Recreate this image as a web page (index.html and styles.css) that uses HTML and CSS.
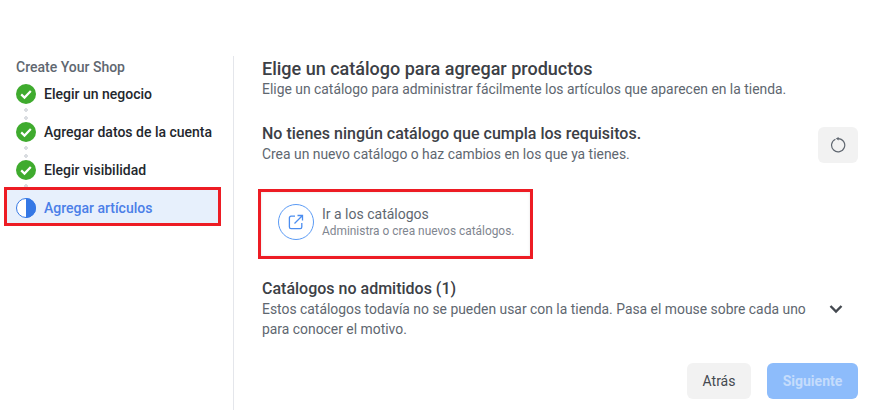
FILE: index.html
```html
<!DOCTYPE html>
<html lang="es">
<head>
    <meta charset="UTF-8">
    <title>Create Your Shop</title>
    <link rel="stylesheet" href="styles.css">
</head>
<body>
    <div class="wizard">
        <aside class="sidebar">
            <h4 class="sidebar-title">Create Your Shop</h4>
            <ul class="steps">
                <li class="step done">
                    <svg class="step-icon" viewBox="0 0 20 20"><circle cx="10" cy="10" r="10" fill="#3fab2e"/><path d="M5.2 10.4l3.3 3.2 6.3-6.6" fill="none" stroke="#fff" stroke-width="2.2"/></svg>
                    <span>Elegir un negocio</span>
                </li>
                <li class="step done">
                    <svg class="step-icon" viewBox="0 0 20 20"><circle cx="10" cy="10" r="10" fill="#3fab2e"/><path d="M5.2 10.4l3.3 3.2 6.3-6.6" fill="none" stroke="#fff" stroke-width="2.2"/></svg>
                    <span>Agregar datos de la cuenta</span>
                </li>
                <li class="step done">
                    <svg class="step-icon" viewBox="0 0 20 20"><circle cx="10" cy="10" r="10" fill="#3fab2e"/><path d="M5.2 10.4l3.3 3.2 6.3-6.6" fill="none" stroke="#fff" stroke-width="2.2"/></svg>
                    <span>Elegir visibilidad</span>
                </li>
                <li class="step current">
                    <svg class="step-icon" viewBox="0 0 20 20"><circle cx="10" cy="10" r="9.5" fill="#fff" stroke="#3578e5"/><path d="M10 0a10 10 0 0 1 0 20z" fill="#3578e5"/></svg>
                    <span>Agregar artículos</span>
                </li>
            </ul>
        </aside>

        <main class="content">
            <h2 class="title">Elige un catálogo para agregar productos</h2>
            <p class="text">Elige un catálogo para administrar fácilmente los artículos que aparecen en la tienda.</p>

            <div class="notice">
                <div>
                    <h3 class="subtitle">No tienes ningún catálogo que cumpla los requisitos.</h3>
                    <p class="text">Crea un nuevo catálogo o haz cambios en los que ya tienes.</p>
                </div>
                <button class="btn refresh" type="button" aria-label="Actualizar">
                    <svg viewBox="0 0 16 16" width="16" height="16"><path d="M5.4 2.2A6.6 6.6 0 1 0 8 1.6" fill="none" stroke="#606770" stroke-width="1.2"/><path d="M8.6 0v3.4L5.8 1.6z" fill="#606770"/></svg>
                </button>
            </div>

            <a class="link-card" href="#">
                <span class="link-icon">
                    <svg viewBox="0 0 16 16" width="16" height="16"><path d="M7 2.2H3a1.6 1.6 0 0 0-1.6 1.6V13A1.6 1.6 0 0 0 3 14.6h9.200a1.6 1.6 0 0 0 1.6-1.6V9" fill="none" stroke="#4b8df0" stroke-width="1.3"/><path d="M6.5 9.500L14 2M9.500 1.500h5v5" fill="none" stroke="#4b8df0" stroke-width="1.3"/></svg>
                </span>
                <span class="link-text">
                    <span class="link-title">Ir a los catálogos</span>
                    <span class="link-desc">Administra o crea nuevos catálogos.</span>
                </span>
            </a>

            <div class="unsupported">
                <div>
                    <h3 class="subtitle">Catálogos no admitidos (1)</h3>
                    <p class="text">Estos catálogos todavía no se pueden usar con la tienda. Pasa el mouse sobre cada uno para conocer el motivo.</p>
                </div>
                <svg class="chevron" viewBox="0 0 14 10" width="14" height="10"><path d="M1.5 2l5.500 5.500L12.500 2" fill="none" stroke="#444950" stroke-width="2.4"/></svg>
            </div>

            <div class="actions">
                <button class="btn back" type="button">Atrás</button>
                <button class="btn primary" type="button" disabled>Siguiente</button>
            </div>
        </main>
    </div>
</body>
</html>
```

FILE: styles.css
```css
body {
    margin: 0;
    background-color: #ffffff;
    font-family: Roboto, "Liberation Sans", sans-serif;
    color: #444950;
    height: 410px;
    overflow: hidden;
}
.wizard {
    display: flex;
    padding-top: 56px;
}
.sidebar {
    width: 233px;
    height: 354px;
    border-right: 1px solid #e4e6eb;
    flex-shrink: 0;
}
.sidebar-title {
    margin: 3px 0 0 16px;
    font-size: 14px;
    line-height: 16px;
    font-weight: 500;
    color: #606770;
}
.steps {
    list-style: none;
    margin: 2px 0 0 0;
    padding: 0;
}
.step {
    position: relative;
    display: flex;
    align-items: center;
    height: 34px;
    margin-bottom: 4px;
    padding-left: 16px;
    font-size: 14px;
    font-weight: 500;
    color: #23272d;
}
.step:not(:last-child)::after {
    content: "";
    position: absolute;
    left: 24px;
    top: 31px;
    width: 4px;
    height: 12px;
    background: radial-gradient(circle at 2px 2px, #dadde1 2px, transparent 2px) 0 0 / 4px 8px;
}
.step-icon {
    width: 20px;
    height: 20px;
    margin-right: 8px;
    flex-shrink: 0;
}
/* the red box is part of the screenshot */
.step.current {
    box-sizing: border-box;
    width: 217px;
    height: 39px;
    margin: -4px 0 0 4px;
    padding: 3px 0 0 9px;
    border: 3px solid #ed1c24;
    background-color: #e7f0fc;
    color: #4b7fe8;
}
.content {
    flex: 1;
    padding: 3px 15px 0 28px;
}
.title {
    margin: 0;
    font-size: 18px;
    line-height: 20px;
    font-weight: 500;
    color: #3c4046;
}
.text {
    margin: 0;
    font-size: 13.9px;
    line-height: 20px;
    color: #606770;
}
.subtitle {
    margin: 0;
    font-size: 16px;
    line-height: 20px;
    font-weight: 500;
    color: #3c4046;
}
.notice {
    display: flex;
    justify-content: space-between;
    align-items: center;
    margin-top: 25px;
}
.btn {
    height: 36px;
    padding: 0 16px;
    border: none;
    border-radius: 6px;
    background-color: #f2f2f2;
    color: #444950;
    font-family: inherit;
    font-size: 14px;
}
.back {
    width: 64px;
    padding: 0;
}
.refresh {
    display: flex;
    align-items: center;
    justify-content: center;
    width: 40px;
    margin-top: 2px;
    padding: 0;
}
.link-card {
    display: flex;
    align-items: center;
    box-sizing: border-box;
    width: 275px;
    height: 70px;
    margin: 25px 0 0 -4px;
    padding: 0 0 4px 17px;
    border: 3px solid #ed1c24;
    text-decoration: none;
    box-shadow: inset 0 0 3px rgba(0, 0, 0, 0.1);
}
.link-icon {
    display: flex;
    align-items: center;
    justify-content: center;
    width: 36px;
    height: 36px;
    margin-right: 8px;
    box-sizing: border-box;
    border: 1px solid #5b9bf5;
    border-radius: 50%;
    flex-shrink: 0;
}
.link-text {
    display: flex;
    flex-direction: column;
    margin-top: 2px;
}
.link-title {
    font-size: 14px;
    line-height: 17px;
    color: #606770;
}
.link-desc {
    font-size: 11.9px;
    line-height: 17px;
    color: #7f8690;
}
.unsupported {
    display: flex;
    justify-content: space-between;
    align-items: center;
    margin-top: 20px;
}
.unsupported .text {
    width: 552px;
}
.chevron {
    margin-right: 15px;
}
.actions {
    display: flex;
    justify-content: flex-end;
    gap: 16px;
    margin-top: 24px;
}
.primary {
    width: 91px;
    padding: 0;
    background-color: #8dbcfb;
    color: #c5dcfb;
    font-weight: 700;
}
```
